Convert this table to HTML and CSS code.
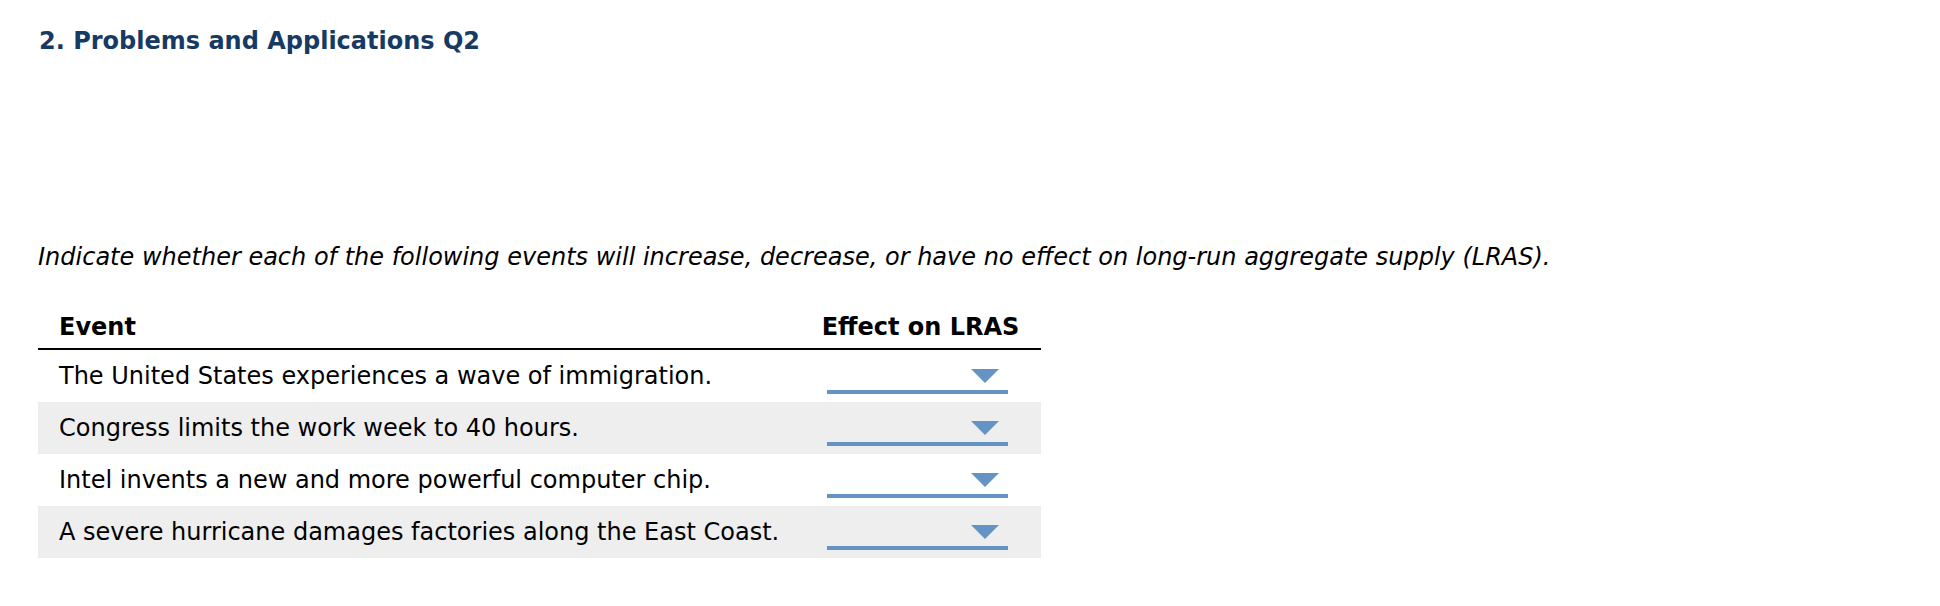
FILE: index.html
```html
<!DOCTYPE html>
<html>
<head>
<meta charset="utf-8">
<link rel="stylesheet" href="styles.css">
</head>
<body>
<div class="page">
  <h1 class="title">2. Problems and Applications Q2</h1>
  <p class="prompt">Indicate whether each of the following events will increase, decrease, or have no effect on long-run aggregate supply (LRAS).</p>
  <div class="table">
    <div class="row head">
      <div class="cell event">Event</div>
      <div class="cell effect">Effect on LRAS</div>
    </div>
    <div class="row">
      <div class="cell event">The United States experiences a wave of immigration.</div>
      <div class="cell select"><div class="dropdown"><span class="arrow"></span></div></div>
    </div>
    <div class="row alt">
      <div class="cell event">Congress limits the work week to 40 hours.</div>
      <div class="cell select"><div class="dropdown"><span class="arrow"></span></div></div>
    </div>
    <div class="row">
      <div class="cell event">Intel invents a new and more powerful computer chip.</div>
      <div class="cell select"><div class="dropdown"><span class="arrow"></span></div></div>
    </div>
    <div class="row alt">
      <div class="cell event">A severe hurricane damages factories along the East Coast.</div>
      <div class="cell select"><div class="dropdown"><span class="arrow"></span></div></div>
    </div>
  </div>
</div>
</body>
</html>
```

FILE: styles.css
```css
html, body {
  margin: 0;
  padding: 0;
  background: #ffffff;
}

body {
  font-family: "DejaVu Sans", Verdana, sans-serif;
  font-size: 24px;
  line-height: 28px;
  color: #000;
}

.page {
  padding: 27px 0 0 38px;
}

.title {
  margin: 0 0 0 1px;
  font-size: 24px;
  line-height: 28px;
  font-weight: bold;
  color: #173a64;
}

.prompt {
  margin: 188px 0 0 0;
  font-style: italic;
  color: #000;
}

.table {
  margin-top: 38px;
  width: 1003px;
}

.row {
  display: grid;
  grid-template-columns: 767px 236px;
  height: 52px;
}

.row.alt {
  background: #eeeeee;
}

.row.head {
  height: 39px;
  border-bottom: 2px solid #000;
}

.head .cell {
  font-weight: bold;
  padding-top: 4px;
}

.cell.event {
  display: flex;
  align-items: center;
  padding-left: 21px;
}

.head .cell.event {
  align-items: flex-start;
}

.head .cell.effect {
  display: flex;
  justify-content: center;
  padding-right: 5px;
}

.cell.select {
  display: flex;
  align-items: flex-end;
  padding: 0 0 8px 22px;
}

.dropdown {
  position: relative;
  width: 181px;
  height: 21px;
  border-bottom: 4px solid #6394c4;
}

.arrow {
  position: absolute;
  right: 9px;
  top: 0;
  width: 0;
  height: 0;
  border-left: 14px solid transparent;
  border-right: 14px solid transparent;
  border-top: 14px solid #6394c4;
}
```
